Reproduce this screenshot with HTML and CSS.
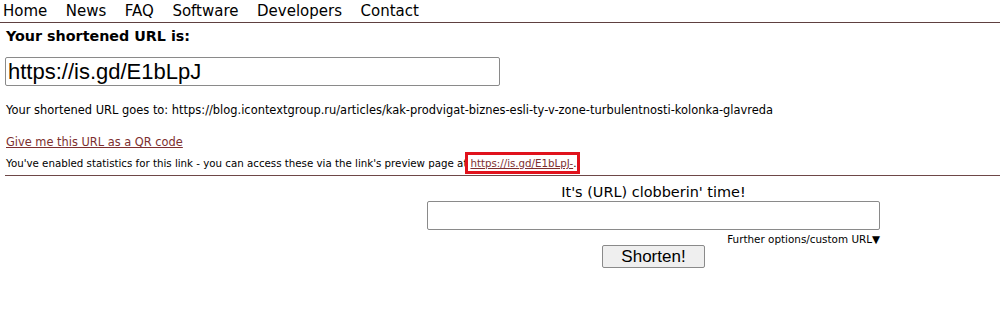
FILE: index.html
```html
<!DOCTYPE html>
<html lang="en">
<head>
    <meta charset="UTF-8">
    <title>is.gd - shortened URL</title>
    <link rel="stylesheet" href="styles.css">
</head>
<body>

    <!-- Top menu -->
    <ul class="menu">
        <li>Home</li>
        <li>News</li>
        <li>FAQ</li>
        <li>Software</li>
        <li>Developers</li>
        <li>Contact</li>
    </ul>

    <div class="result">
        <h3>Your shortened URL is:</h3>
        <input class="short-url" type="text" value="https://is.gd/E1bLpJ" readonly>
        <p class="goes-to">Your shortened URL goes to: https://blog.icontextgroup.ru/articles/kak-prodvigat-biznes-esli-ty-v-zone-turbulentnosti-kolonka-glavreda</p>
        <p class="qr"><a href="#">Give me this URL as a QR code</a></p>
        <p class="stats">You've enabled statistics for this link - you can access these via the link's preview page at<span class="mark"><a href="#">https://is.gd/E1bLpJ-</a>.</span></p>
    </div>

    <!-- Shorten form -->
    <form class="shorten">
        <div class="title">It's (URL) clobberin' time!</div>
        <input class="url-box" type="text">
        <div class="options">Further options/custom URL&#9660;</div>
        <button class="btn" type="button">Shorten!</button>
    </form>

</body>
</html>
```

FILE: styles.css
```css
body {
    margin: 0;
    background: #fff;
    color: #000;
    font-family: 'DejaVu Sans', Verdana, sans-serif;
}

.menu {
    display: flex;
    gap: 18.5px;
    margin: 0;
    padding: 2px 3px 2px;
    list-style: none;
    font-size: 15px;
    border-bottom: 1px solid #5e4040;
}

.result {
    border-bottom: 1px solid #6e4848;
    margin-left: 5px;
    padding-left: 1px;
}

.result h3 {
    margin: 5px 0 13px;
    font-size: 14.3px;
}

.short-url {
    display: block;
    box-sizing: border-box;
    width: 495px;
    height: 29px;
    margin-left: -1px;
    padding: 0 2px;
    border: 1px solid #8a8a8a;
    border-radius: 2px;
    font-family: 'Liberation Sans', Arial, sans-serif;
    font-size: 22px;
}

.goes-to {
    margin: 17px 0 0;
    font-size: 11.45px;
}

.qr {
    margin: 18px 0 0;
    font-size: 11.4px;
}

a {
    color: #7d2f2f;
}

.stats {
    margin: 8px 0 6px;
    font-size: 10.25px;
}

/* red highlight drawn over the preview link */
.mark {
    margin-left: -2px;
    border: 3px solid #e0121c;
    padding: 2px 1px 2px 2px;
}

.shorten {
    width: 453px;
    margin: 8px 0 0 427px;
    text-align: center;
}

.title {
    font-size: 14.45px;
}

.url-box {
    display: block;
    box-sizing: border-box;
    width: 453px;
    height: 29px;
    margin-top: 1px;
    border: 1px solid #8a8a8a;
    border-radius: 2px;
}

.options {
    text-align: right;
    font-size: 10.4px;
    margin-top: 3px;
}

.btn {
    width: 103px;
    height: 23px;
    margin-top: 0;
    padding: 0;
    border: 1px solid #8a8a8a;
    border-radius: 2px;
    background: #efefef;
    font-family: 'Liberation Sans', Arial, sans-serif;
    font-size: 17px;
}
```
